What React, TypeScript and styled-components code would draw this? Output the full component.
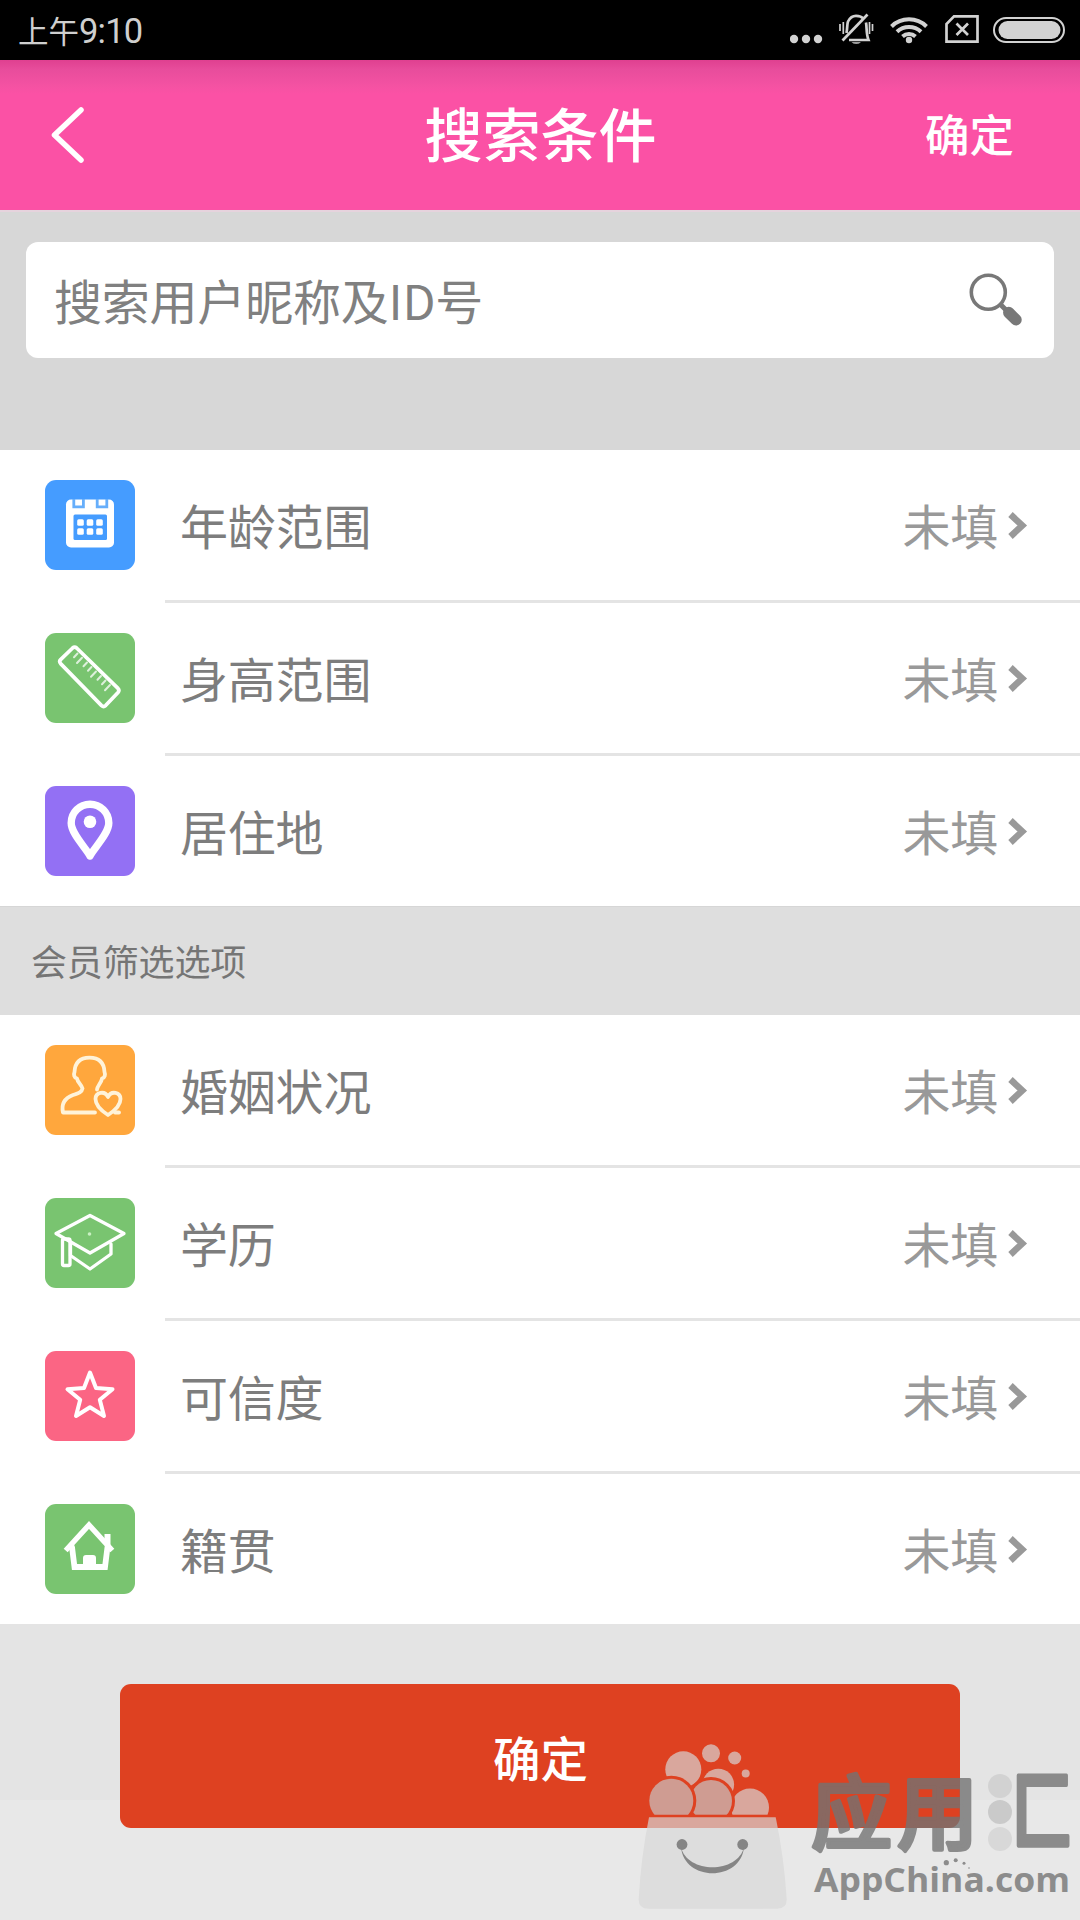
import React from 'react';
import styled, { createGlobalStyle } from 'styled-components';

const GlobalStyle = createGlobalStyle`
  * { box-sizing: border-box; }
  body {
    margin: 0;
    background: #e8e8e8;
    font-family: 'Noto Sans CJK SC', 'Noto Sans', sans-serif;
  }
  svg { display: block; flex: none; }
`;

const Screen = styled.div`
  position: relative;
  display: flex;
  flex-direction: column;
  width: 1080px;
  height: 1920px;
  overflow: hidden;
  background: #e8e8e8;
`;

const StatusBar = styled.div`
  display: flex;
  align-items: center;
  justify-content: space-between;
  height: 60px;
  padding: 0 14px 0 18px;
  background: #000;
  color: #cfcfcf;
`;

const Clock = styled.span`
  font-size: 30.5px;
  line-height: 60px;
`;

const ClockDigits = styled.span`
  font-family: Roboto, sans-serif;
  font-size: 34.5px;
  letter-spacing: -0.8px;
`;

const StatusIcons = styled.div`
  display: flex;
  gap: 14px;
`;

const Header = styled.header`
  display: grid;
  grid-template-columns: 1fr auto 1fr;
  align-items: center;
  height: 150px;
  padding: 0 66px 0 48px;
  background: linear-gradient(#df4090 0, #e84d9c 10px, #f552a3 27px, #fb51a5 34px);
  color: #fff;
`;

const Title = styled.h1`
  margin: 0;
  padding: 0 0 7px 19px;
  font-size: 58px;
  font-weight: 500;
  line-height: 80px;
`;

const HeaderAction = styled.span`
  justify-self: end;
  padding-bottom: 4px;
  font-size: 44.5px;
  font-weight: 500;
  line-height: 80px;
`;

const SearchPanel = styled.section`
  height: 240px;
  padding: 30px 26px 0;
  border-top: 2px solid #e6d3dd;
  background: #d7d7d7;
`;

const SearchField = styled.div`
  display: flex;
  align-items: center;
  justify-content: space-between;
  height: 116px;
  padding: 0 30px 0 28px;
  border-radius: 12px;
  background: #fff;
`;

const Placeholder = styled.span`
  padding-bottom: 3px;
  color: #808080;
  font-size: 48px;
  letter-spacing: -0.2px;
  line-height: 80px;
`;

const List = styled.section`
  background: #fff;
`;

const Row = styled.div`
  display: flex;
  align-items: center;
  height: 150px;
  padding: 0 52px 0 45px;
`;

const Divider = styled.div`
  height: 3px;
  margin-left: 165px;
  background: #e4e4e4;
`;

const IconTile = styled.div<{ $color: string }>`
  width: 90px;
  height: 90px;
  border-radius: 11px;
  background: ${(p) => p.$color};
`;

const RowLabel = styled.span`
  flex: 1;
  margin-left: 45px;
  padding-bottom: 3px;
  color: #7d7d7d;
  font-size: 48px;
  letter-spacing: -0.2px;
  line-height: 80px;
`;

const RowValue = styled.span`
  margin-right: 10px;
  padding-bottom: 3px;
  color: #999;
  font-size: 48px;
  letter-spacing: -0.2px;
  line-height: 80px;
`;

const GroupTitle = styled.h2`
  margin: 0;
  height: 109px;
  padding: 0 31px;
  background: #dedede;
  border-top: 1px solid #d6d6d6;
  color: #757575;
  font-size: 36px;
  font-weight: 400;
  letter-spacing: -0.15px;
  line-height: 107px;
`;

const Footer = styled.footer`
  height: 176px;
  padding: 60px 120px 0;
  background: #e4e4e4;
`;

const SubmitButton = styled.button`
  display: block;
  width: 100%;
  height: 144px;
  padding: 0 0 0 1px;
  border: 0;
  border-radius: 11px;
  background: #de4121;
  color: #fff;
  font-family: inherit;
  font-size: 47.5px;
  font-weight: 500;
`;

const Watermark = styled.div`
  position: absolute;
  right: 0;
  bottom: 0;
  width: 450px;
  height: 190px;
`;

const line = {
  fill: 'none',
  stroke: '#fff',
  strokeLinecap: 'round',
  strokeLinejoin: 'round',
} as const;

const Glyph = ({ children }: { children: React.ReactNode }) => (
  <svg width="90" height="90" viewBox="0 0 90 90">{children}</svg>
);

const CalendarIcon = () => (
  <Glyph>
    <rect x="21" y="19.5" width="48" height="48" rx="5" fill="#fff" />
    <rect x="28.5" y="34.5" width="33.5" height="25.5" rx="1.5" fill="#459cff" />
    <g fill="none" stroke="#66aefb" strokeWidth="2.8">
      <path d="M28.8 19v7.8h9.6V19" />
      <path d="M52.2 19v7.8h9.6V19" />
    </g>
    {[35.5, 45, 54.5].map((x) =>
      [42.5, 51.5].map((y) => (
        <rect key={`${x}-${y}`} x={x - 3.3} y={y - 3.3} width="6.6" height="6.6" rx="1.5" fill="#fff" />
      )),
    )}
  </Glyph>
);

const RulerIcon = () => (
  <Glyph>
    <path d="M15.6 26.6 27.6 15a3 3 0 0 1 4 0L73 55.4a3 3 0 0 1 0 4L60.6 72.6a3 3 0 0 1-4 0L15.6 30.6a3 3 0 0 1 0-4Z" {...line} strokeWidth="3.7" />
    <path d="M32.5 20.5l-3.5 3.7M37 24.7l-5 5.3M42 29.5l-3.500 3.7M46.5 34l-3.5 3.7M51 38.5l-5 5.3M56 43l-3.5 3.700M60.5 47.5l-3.5 3.7M65 52l-5 5.3" {...line} strokeWidth="2" opacity="0.75" />
  </Glyph>
);

const PinIcon = () => (
  <Glyph>
    <path d="M45 70C42 63 26.2 48 26.2 37a18.8 18.8 0 0 1 37.6 0C63.8 48 48 63 45 70Z" {...line} strokeWidth="7.4" />
    <circle cx="45" cy="35.7" r="6.3" fill="#fff" />
  </Glyph>
);

const PersonHeartIcon = () => (
  <Glyph>
    <g {...line} stroke="#fff3d9" strokeWidth="3.8">
      <path d="M50 67.500H18c-2-9 2-14.5 10-17.500 6-2 9-3 9.500-6.500-1-4-5-6-5.500-10-3-1-3.500-4-2.500-6.500C30 18 35 12.700 44.500 12.700S59 18 59.500 27c1 2.500.5 5.500-2.500 6.500-.5 4-4.500 7-5 11" />
      <path d="M63 70C56 65.500 50.500 60 50.500 54c0-6.500 9-9 12.500-2 3.500-7 12.500-4.500 12.500 2 0 6-5.500 11.500-12.500 16Z" />
      <path d="M70 67.500h4" />
    </g>
  </Glyph>
);

const CapIcon = () => (
  <Glyph>
    <g {...line} strokeWidth="3.3">
      <path d="M11 35.5 45 17.500 79 35.500 45 55Z" />
      <path d="M25.500 44.500V57.500L45 71 66 56V46" />
      <rect x="17.500" y="41" width="7.500" height="26.500" rx="1.500" />
    </g>
    <circle cx="44.500" cy="36" r="1.800" fill="#c9f0c2" />
  </Glyph>
);

const StarIcon = () => (
  <Glyph>
    <path d="M45 21.500 51 37 67.500 38.200 54.800 48.700 59 65 45 56.300 31 65 35.200 48.700 22.500 38.200 39 37Z" {...line} strokeWidth="4" />
  </Glyph>
);

const HouseIcon = () => (
  <Glyph>
    <path d="M22.500 44.500 44 21 65.500 44.500" {...line} strokeLinecap="square" strokeLinejoin="miter" strokeWidth="5.400" />
    <path d="M27 43 29.500 63H60L62.500 43" {...line} strokeLinejoin="miter" strokeWidth="5.800" />
    <path d="M59.500 30h6v13l-6-6ZM38 66V54q0-3 3-3h7q3 0 3 3v12Z" fill="#fff" />
  </Glyph>
);

const Chevron = () => (
  <svg width="20" height="32" viewBox="1008 509 20 32">
    <path d="M1010.500 514.500 1022.300 525.500 1010.500 536.500" fill="none" stroke="#999" strokeWidth="6.500" />
  </svg>
);

const StatusGlyphs = () => (
  <StatusIcons>
    <svg width="34" height="60" viewBox="790 0 34 60" fill="#d2d2d2">
      <circle cx="794" cy="39" r="4.200" />
      <circle cx="806" cy="39" r="4.200" />
      <circle cx="818" cy="39" r="4.200" />
    </svg>
    <svg width="37" height="60" viewBox="838 0 37 60" fill="none" stroke="#d2d2d2">
      <path d="M846.500 33c1-5 .5-9 1.500-11.500 2-4 5-5.700 8-5.700 3.500 0 6 1 7.500 3M866 22.500c1 5 0 11 2.500 17.500H849" strokeWidth="2.700" />
      <path d="M842.500 40.500 867.500 14.500" strokeWidth="2.700" />
      <path d="M840 24v7M843.300 22v12M869.500 22v12M872.500 24v7" strokeWidth="1.700" />
      <path d="M851.500 42.200a6 4 0 0 0 9.500 0Z" fill="#d2d2d2" stroke="none" />
    </svg>
    <svg width="41" height="60" viewBox="889 0 41 60" fill="none" stroke="#d2d2d2" strokeWidth="4">
      <path d="M891.500 26.500a25 25 0 0 1 35 0M897 31.800a17.500 17.500 0 0 1 24 0M902.500 36.500a9.700 9.700 0 0 1 13 0" />
      <circle cx="909" cy="40" r="3.200" fill="#d2d2d2" stroke="none" />
    </svg>
    <svg width="35" height="60" viewBox="944 0 35 60" fill="none" stroke="#d2d2d2" strokeWidth="2.700">
      <path d="M954 16.300h23.500v25.400h-31V24ZM956.500 23.500l11.500 11.500M968 23.500 956.500 35" />
    </svg>
    <svg width="73" height="60" viewBox="993 0 73 60">
      <rect x="994" y="18" width="70" height="24" rx="12" fill="none" stroke="#d2d2d2" strokeWidth="2" />
      <rect x="998.500" y="21" width="62" height="18" rx="9" fill="#d2d2d2" />
    </svg>
  </StatusIcons>
);

const SearchIcon = () => (
  <svg width="56" height="60" viewBox="968 270 56 60">
    <circle cx="988.300" cy="292.300" r="17" fill="none" stroke="#787878" strokeWidth="3.600" />
    <path d="M1000.500 304.500l7 7" stroke="#787878" strokeWidth="5" />
    <path d="M1008.800 312.600 1016 319.800" stroke="#787878" strokeWidth="11.500" strokeLinecap="round" />
  </svg>
);

const WatermarkArt = () => (
  <svg width="450" height="190" viewBox="630 1730 450 190">
    <defs>
      <mask id="behind-left">
        <rect x="630" y="1730" width="200" height="84.700" fill="#fff" />
        <circle cx="671.300" cy="1800.700" r="25" fill="#000" />
      </mask>
      <mask id="behind-mid">
        <rect x="630" y="1730" width="200" height="84.700" fill="#fff" />
        <circle cx="671.300" cy="1800.700" r="25" fill="#000" />
        <circle cx="711" cy="1801" r="24" fill="#000" />
      </mask>
      <clipPath id="bag-rim">
        <rect x="630" y="1730" width="200" height="84.700" />
      </clipPath>
    </defs>
    <g fill="#d8d8d8" opacity="0.68">
      <circle cx="711" cy="1753.300" r="9" />
      <circle cx="734.700" cy="1758" r="6.500" />
      <circle cx="745.700" cy="1773.500" r="4" />
      <g mask="url(#behind-mid)">
        <circle cx="683.300" cy="1769.300" r="18" />
        <circle cx="718.300" cy="1784.500" r="15.800" />
        <circle cx="750" cy="1807.500" r="19" />
      </g>
      <circle cx="711" cy="1801" r="21" fill="#c8c8c8" mask="url(#behind-left)" />
      <circle cx="671.300" cy="1800.700" r="22" fill="#c8c8c8" clipPath="url(#bag-rim)" />
      <path d="M649 1817.300H775.700Q784 1857 786.700 1899 787 1908.700 777 1908.700H648.500Q638.500 1908.700 638.700 1899 641 1857 649 1817.300Z" />
    </g>
    <g fill="#858585">
      <circle cx="682" cy="1844.500" r="5.400" />
      <circle cx="742.700" cy="1844.500" r="5.400" />
      <path d="M681 1847C684 1882 741 1882 744 1847 738 1874 687 1874 681 1847Z" />
    </g>
    <g fill="#d2d2d2">
      <circle cx="1000" cy="1786" r="12" />
      <circle cx="1000" cy="1812" r="12" fill="#cacaca" />
      <circle cx="1000" cy="1839" r="12" fill="#d8d8d8" />
    </g>
    <g
      fill="#737373"
      stroke="#737373"
      strokeWidth="4"
      strokeLinejoin="round"
      opacity="0.79"
      fontFamily="'Noto Sans CJK SC', sans-serif"
      fontWeight="500"
    >
      <text x="811" y="1843" fontSize="81">应</text>
      <text x="897" y="1843" fontSize="81">用</text>
      <text transform="translate(1012 1843) scale(0.73 1.03)" x="0" y="0" fontSize="83" fontWeight="700">匚</text>
    </g>
    <g fill="#8c8c8c">
      <text x="814" y="1891.700" fontSize="34" fontFamily="'Open Sans', 'Noto Sans', sans-serif" fontWeight="700" textLength="256" lengthAdjust="spacingAndGlyphs">
        AppChina.com
      </text>
      <circle cx="946.300" cy="1862.700" r="2.600" />
      <circle cx="955.700" cy="1860.300" r="2" />
      <circle cx="964" cy="1863.300" r="1.500" />
      <circle cx="969" cy="1868" r="0.800" />
    </g>
  </svg>
);

interface Option {
  label: string;
  color: string;
  icon: React.ReactNode;
}

const basicOptions: Option[] = [
  { label: '年龄范围', color: '#459cff', icon: <CalendarIcon /> },
  { label: '身高范围', color: '#79c470', icon: <RulerIcon /> },
  { label: '居住地', color: '#9370f4', icon: <PinIcon /> },
];

const memberOptions: Option[] = [
  { label: '婚姻状况', color: '#ffa73d', icon: <PersonHeartIcon /> },
  { label: '学历', color: '#79c470', icon: <CapIcon /> },
  { label: '可信度', color: '#fb6584', icon: <StarIcon /> },
  { label: '籍贯', color: '#79c470', icon: <HouseIcon /> },
];

const OptionList = ({ options }: { options: Option[] }) => (
  <List>
    {options.map((o, i) => (
      <React.Fragment key={o.label}>
        {i > 0 && <Divider />}
        <Row>
          <IconTile $color={o.color}>{o.icon}</IconTile>
          <RowLabel>{o.label}</RowLabel>
          <RowValue>未填</RowValue>
          <Chevron />
        </Row>
      </React.Fragment>
    ))}
  </List>
);

export default function App() {
  return (
    <Screen>
      <GlobalStyle />
      <StatusBar>
        <Clock>
          上午<ClockDigits>9:10</ClockDigits>
        </Clock>
        <StatusGlyphs />
      </StatusBar>
      <Header>
        <svg width="40" height="60" viewBox="48 105 40 60">
          <path d="M81 110 54.500 135 81 160" fill="none" stroke="#fff" strokeWidth="5.500" strokeLinecap="round" strokeLinejoin="round" />
        </svg>
        <Title>搜索条件</Title>
        <HeaderAction>确定</HeaderAction>
      </Header>
      <SearchPanel>
        <SearchField>
          <Placeholder>搜索用户昵称及ID号</Placeholder>
          <SearchIcon />
        </SearchField>
      </SearchPanel>
      <OptionList options={basicOptions} />
      <GroupTitle>会员筛选选项</GroupTitle>
      <OptionList options={memberOptions} />
      <Footer>
        <SubmitButton>确定</SubmitButton>
      </Footer>
      <Watermark>
        <WatermarkArt />
      </Watermark>
    </Screen>
  );
}
